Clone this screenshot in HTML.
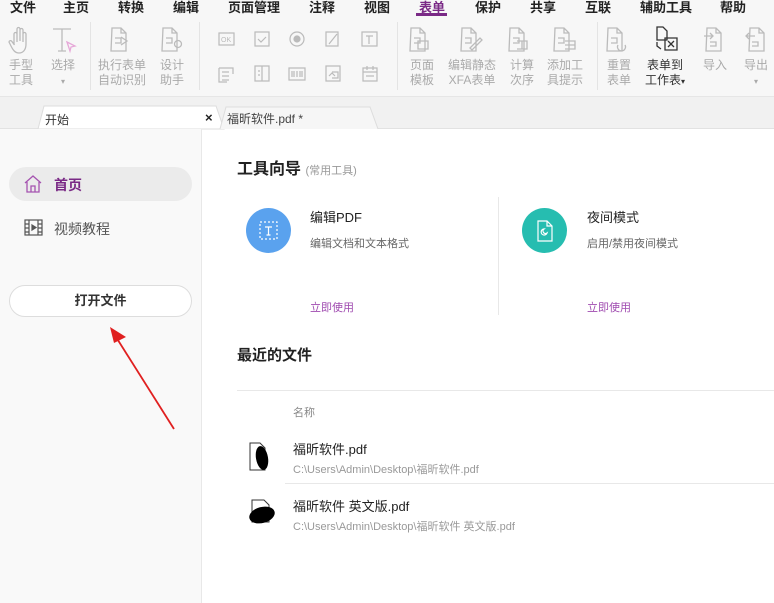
<!DOCTYPE html>
<html><head><meta charset="utf-8"><style>
*{margin:0;padding:0;box-sizing:border-box}
body{width:774px;height:603px;overflow:hidden;background:#fff;font-family:"Liberation Sans","Noto Sans CJK SC",sans-serif;position:relative;color:#333}
.a{position:absolute;white-space:nowrap}
.menu{font-size:13px;font-weight:bold;color:#222;top:-3px}
.tl{font-size:12px;color:#aaa;line-height:15px;text-align:center}
.ic{position:absolute;border:1.3px solid #bbb;border-radius:2px}
.sep{position:absolute;top:22px;width:1px;height:68px;background:#e4e4e4}
</style></head><body>
<div class="a" style="left:0;top:0;width:774px;height:96px;background:#f7f7f7"></div>
<div class="a menu" style="left:10px">文件</div>
<div class="a menu" style="left:63px">主页</div>
<div class="a menu" style="left:118px">转换</div>
<div class="a menu" style="left:173px">编辑</div>
<div class="a menu" style="left:228px">页面管理</div>
<div class="a menu" style="left:309px">注释</div>
<div class="a menu" style="left:364px">视图</div>
<div class="a menu" style="left:419px;color:#7a2a86">表单</div>
<div class="a" style="left:416px;top:13px;width:31px;height:3px;background:#7a2a86"></div>
<div class="a menu" style="left:475px">保护</div>
<div class="a menu" style="left:530px">共享</div>
<div class="a menu" style="left:585px">互联</div>
<div class="a menu" style="left:640px">辅助工具</div>
<div class="a menu" style="left:720px">帮助</div>

<div class="sep" style="left:90px"></div><div class="sep" style="left:199px"></div><div class="sep" style="left:397px"></div><div class="sep" style="left:597px"></div>
<!-- big icons -->
<svg class="a" style="left:0;top:24px" width="774" height="36" fill="none" stroke="#bbb" stroke-width="1.3">
<path d="M14 20v-10a1.5 1.5 0 013 0v8M17 17V5a1.5 1.5 0 013 0v12M20 17V6a1.5 1.5 0 013 0v12M23 18v-8a1.5 1.5 0 013 0v10c0 6-3 9-7 9s-6-3-8-7l-2-4a1.5 1.5 0 012.5-1l3 4"/>
<path d="M53 5h18M62 5v22M58 27h8"/><path d="M67 18l8 4-4 1-1 4z" stroke="#e6a8d8"/>
<path d="M112 4h9l5 5v18h-15zM121 4v5h5M115 14h6v5h-6M121 13l6 4-6 4"/>
<path d="M163 4h9l5 5v18h-15zM172 4v5h5M166 14h6v5h-6"/><circle cx="178" cy="20" r="3.5"/>
<path d="M411 4h9l5 5v18h-15zM420 4v5h5M414 14h6v5h-6M418 17h10v8h-10z"/>
<path d="M462 4h9l5 5v18h-15zM471 4v5h5M465 14h6v5h-6M470 24l10-10 2 2-10 10z" />
<path d="M510 4h9l5 5v18h-15zM519 4v5h5M513 14h6v5h-6M517 17h10v8h-10M522 17v8"/>
<path d="M555 4h9l5 5v18h-15zM564 4v5h5M558 14h6v5h-6M565 17h10v8h-10M565 21h10"/>
<path d="M608 4h9l5 5v18h-15zM617 4v5h5M611 14h6v5h-6M618 21a4 4 0 107 0"/>
<path d="M657 3h6l4 4v9h-10z" stroke="#333"/><path d="M657 18v4l4 3" stroke="#333"/><path d="M665 14h12v12h-12zM668 17l6 6M674 17l-6 6" stroke="#333"/>
<path d="M707 4h9l5 5v18h-15zM716 4v5h5M704 12h8M710 9l3 3-3 3M710 18h6v4h-6"/>
<path d="M750 4h9l5 5v18h-15zM759 4v5h5M755 12h-8M749 9l-3 3 3 3M752 18h6v4h-6"/>
</svg>
<!-- small icons -->
<svg class="a" style="left:0;top:28px" width="400" height="60" fill="none" stroke="#bbb" stroke-width="1.2">
<rect x="219" y="5" width="15" height="12"/><text x="221" y="14" font-size="7" fill="#bbb" stroke="none" font-family="Liberation Sans">OK</text>
<rect x="255" y="4" width="14" height="14"/><path d="M258 11l3 3 5-5"/>
<circle cx="297" cy="11" r="7"/><circle cx="297" cy="11" r="3" fill="#bbb"/>
<path d="M326 4h12v14h-12zM329 16l8-10"/>
<path d="M362 4h15v14h-15zM366 8h7M369 8v8"/>
<path d="M219 40h14v6M219 40v14h8M222 44h7M222 48h7M222 52h7"/>
<path d="M255 38h14v15h-14zM262 38v15M258 43h2M258 47h2"/>
<path d="M289 40h16v12h-16zM292 43v6M294 43v6M297 43v6M300 43v6M302 43v6"/>
<path d="M326 38h14v15h-14zM329 48l3-3 3 3M332 44h6v6h-6"/>
<path d="M363 40h14v13h-14zM363 44h14M367 38v4M373 38v4M366 48h8"/>
</svg>
<div class="a tl" style="left:9px;top:58px">手型<br>工具</div>
<div class="a tl" style="left:51px;top:58px">选择<br><span style="font-size:8px">▾</span></div>
<div class="a tl" style="left:98px;top:58px">执行表单<br>自动识别</div>
<div class="a tl" style="left:160px;top:58px">设计<br>助手</div>
<div class="a tl" style="left:410px;top:58px">页面<br>模板</div>
<div class="a tl" style="left:448px;top:58px">编辑静态<br>XFA表单</div>
<div class="a tl" style="left:510px;top:58px">计算<br>次序</div>
<div class="a tl" style="left:547px;top:58px">添加工<br>具提示</div>
<div class="a tl" style="left:607px;top:58px">重置<br>表单</div>
<div class="a tl" style="left:645px;top:58px;color:#333">表单到<br>工作表<span style="font-size:8px">▾</span></div>
<div class="a tl" style="left:703px;top:58px">导入</div>
<div class="a tl" style="left:744px;top:58px">导出<br><span style="font-size:8px">▾</span></div>

<!-- tab bar -->
<div class="a" style="left:0;top:96px;width:774px;height:33px;background:#f1f1f1;border-top:1px solid #e6e6e6;border-bottom:1px solid #e2e2e2"></div>
<svg class="a" style="left:0;top:100px" width="400" height="30"><path d="M38 29L44 6h172l8 23z" fill="#fff" stroke="#ddd"/><path d="M220 29l6-22h144l8 22" fill="#f6f6f6" stroke="#ddd"/></svg>
<div class="a" style="left:45px;top:111px;font-size:12px;color:#333">开始</div>
<div class="a" style="left:205px;top:110px;font-size:13px;font-weight:bold;color:#222">×</div>
<div class="a" style="left:227px;top:110px;font-size:12px;color:#444">福昕软件.pdf *</div>

<!-- sidebar -->
<div class="a" style="left:0;top:129px;width:202px;height:474px;background:#f9f9f9;border-right:1px solid #e8e8e8"></div>
<div class="a" style="left:9px;top:167px;width:183px;height:34px;border-radius:17px;background:#ebebeb"></div>
<svg class="a" style="left:23px;top:174px" width="20" height="20" fill="none" stroke="#a553b0" stroke-width="1.3"><path d="M2 9L10 2l8 7M4 8v10h12V8M8 18v-6h4v6"/></svg>
<div class="a" style="left:54px;top:175px;font-size:14px;font-weight:bold;color:#7a2a86">首页</div>
<svg class="a" style="left:24px;top:219px" width="20" height="18" fill="none" stroke="#555" stroke-width="1.2"><rect x="1" y="1" width="17" height="15"/><path d="M5 1v15M14 1v15M1 5h4M1 9h4M1 13h4M14 5h4M14 9h4M14 13h4"/><path d="M8 6l4 2.5-4 2.5z" fill="#555"/></svg>
<div class="a" style="left:54px;top:219px;font-size:14px;color:#555">视频教程</div>
<div class="a" style="left:9px;top:285px;width:183px;height:32px;border-radius:16px;background:#fff;border:1px solid #ddd;text-align:center;line-height:30px;font-size:13px;font-weight:bold;color:#333">打开文件</div>
<svg class="a" style="left:100px;top:320px" width="90" height="115"><path d="M74 109L16 17" stroke="#e02020" stroke-width="1.8"/><path d="M10 7l16 10-12 6z" fill="#e02020"/></svg>

<!-- main -->
<div class="a" style="left:237px;top:155px;font-size:16px;font-weight:bold;color:#222">工具向导 <span style="font-size:11px;font-weight:normal;color:#999">(常用工具)</span></div>
<div class="a" style="left:246px;top:208px;width:45px;height:45px;border-radius:50%;background:#5aa2ee"></div>
<svg class="a" style="left:256px;top:218px" width="26" height="26" fill="none" stroke="#fff" stroke-width="1.2"><rect x="4" y="4" width="17" height="17" stroke-dasharray="2 2"/><path d="M9 9h7M12.5 9v8M10.5 17h4"/></svg>
<div class="a" style="left:310px;top:207px;font-size:13px;color:#222">编辑PDF</div>
<div class="a" style="left:310px;top:235px;font-size:11px;color:#666">编辑文档和文本格式</div>
<div class="a" style="left:310px;top:299px;font-size:11px;color:#a04cb0">立即使用</div>
<div class="a" style="left:498px;top:197px;width:1px;height:118px;background:#e8e8e8"></div>
<div class="a" style="left:522px;top:208px;width:45px;height:45px;border-radius:50%;background:#26bdb0"></div>
<svg class="a" style="left:532px;top:218px" width="26" height="26" fill="none" stroke="#fff" stroke-width="1.2"><path d="M6 3h9l5 5v15H6zM15 3v5h5"/><path d="M15 15a3 3 0 11-3-4 2.5 2.5 0 003 4z"/></svg>
<div class="a" style="left:587px;top:207px;font-size:13px;color:#222">夜间模式</div>
<div class="a" style="left:587px;top:235px;font-size:11px;color:#666">启用/禁用夜间模式</div>
<div class="a" style="left:587px;top:299px;font-size:11px;color:#a04cb0">立即使用</div>

<div class="a" style="left:237px;top:344px;font-size:15px;font-weight:bold;color:#222">最近的文件</div>
<div class="a" style="left:237px;top:390px;width:537px;height:1px;background:#e8e8e8"></div>
<div class="a" style="left:293px;top:404px;font-size:11px;color:#888">名称</div>
<svg class="a" style="left:246px;top:438px" width="34" height="95"><path d="M4 5h10l5 5v22H4z" fill="#fff" stroke="#333"/><ellipse cx="16" cy="20" rx="6" ry="12" transform="rotate(-10 16 20)" fill="#000"/><path d="M6 62h12l5 5v17H6z" fill="#fff" stroke="#333"/><ellipse cx="16" cy="77" rx="13" ry="8" transform="rotate(-15 16 77)" fill="#000"/></svg>
<div class="a" style="left:293px;top:439px;font-size:13px;color:#222">福昕软件.pdf</div>
<div class="a" style="left:293px;top:461px;font-size:11px;color:#999">C:\Users\Admin\Desktop\福昕软件.pdf</div>
<div class="a" style="left:285px;top:483px;width:489px;height:1px;background:#e8e8e8"></div>
<div class="a" style="left:293px;top:496px;font-size:13px;color:#222">福昕软件 英文版.pdf</div>
<div class="a" style="left:293px;top:518px;font-size:11px;color:#999">C:\Users\Admin\Desktop\福昕软件 英文版.pdf</div>
</body></html>
